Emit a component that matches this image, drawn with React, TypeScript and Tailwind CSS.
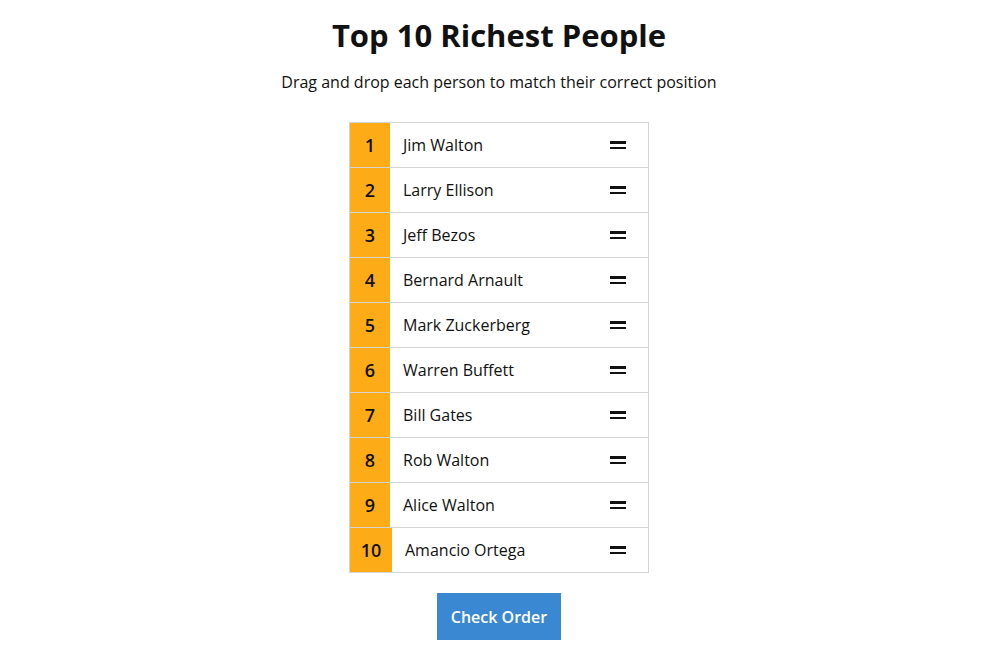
import React from "react";

const people = [
  "Jim Walton",
  "Larry Ellison",
  "Jeff Bezos",
  "Bernard Arnault",
  "Mark Zuckerberg",
  "Warren Buffett",
  "Bill Gates",
  "Rob Walton",
  "Alice Walton",
  "Amancio Ortega",
];

function DragHandle() {
  return (
    <div className="flex flex-col gap-[3px]">
      <span className="block h-[2.5px] w-4 bg-[#111]" />
      <span className="block h-[2.5px] w-4 bg-[#111]" />
    </div>
  );
}

export default function App() {
  return (
    <div className="min-h-screen bg-white text-[#111] flex flex-col items-center pt-[15px] pr-[10px] font-['Open_Sans',sans-serif]">
      <h1 className="text-[31px] leading-[40px] font-bold">Top 10 Richest People</h1>
      <p className="mt-[15px] text-[16px] leading-6">Drag and drop each person to match their correct position</p>

      <ul className="mt-[28px] w-[300px] border border-[#d4d4d4]">
        {people.map((name, i) => (
          <li
            key={name}
            className={`flex items-stretch ${i > 0 ? "h-[45px] border-t border-[#d4d4d4]" : "h-[44px]"}`}
          >
            <div
              className={`flex items-center justify-center bg-[#fdac17] text-[18px] font-semibold ${
                i === 9 ? "w-[42px]" : "w-[40px]"
              }`}
            >
              {i + 1}
            </div>
            <div className="flex flex-1 items-center justify-between pl-[13px] pr-[22px]">
              <span className="text-[16px] font-medium">{name}</span>
              <DragHandle />
            </div>
          </li>
        ))}
      </ul>

      <button className="mt-[20px] h-[47px] w-[124px] bg-[#3a88d2] text-[16px] font-semibold text-white">
        Check Order
      </button>
    </div>
  );
}
